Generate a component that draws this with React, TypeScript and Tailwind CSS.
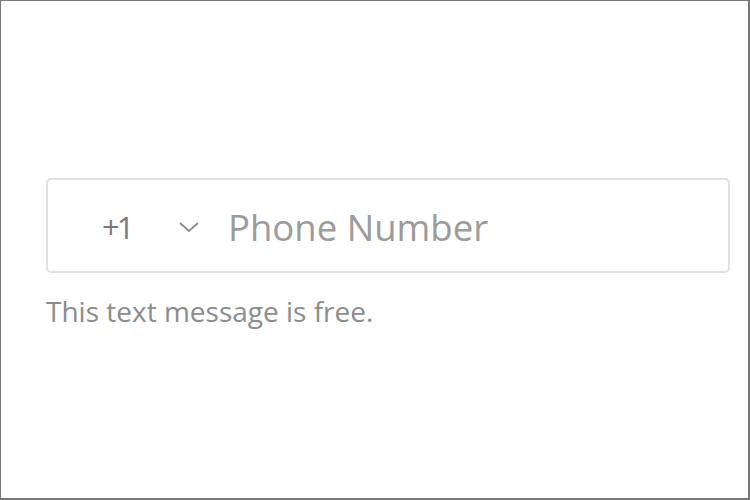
export default function App() {
    return (
        <div className="w-[750px] h-[500px] bg-white border-l border-t border-r-2 border-b-2 border-[#777] pt-[177px] pl-[45px]" style={{ fontFamily: '"Open Sans", "Noto Sans", sans-serif' }}>
            <div className="w-[684px] h-[95px] rounded-[5px] border-2 border-[#e2e2e2] flex items-center pl-[54px]">
                <span className="w-[30px] text-[31px] text-[#7a7a7a] leading-none tracking-[-3px] pt-[3px]">+1</span>
                <svg className="ml-[46px] mt-[3px]" width="22" height="12" viewBox="0 0 22 12" fill="none">
                    <polyline points="2,2 11,10 20,2" stroke="#8a8a8a" strokeWidth="1.8" />
                </svg>
                <span className="ml-[28px] pt-[3px] text-[36.5px] text-[#9b9b9b] leading-none">Phone Number</span>
            </div>
            <p className="mt-[24px] text-[28px] text-[#8c8c8c] leading-none">This text message is free.</p>
        </div>
    );
}
